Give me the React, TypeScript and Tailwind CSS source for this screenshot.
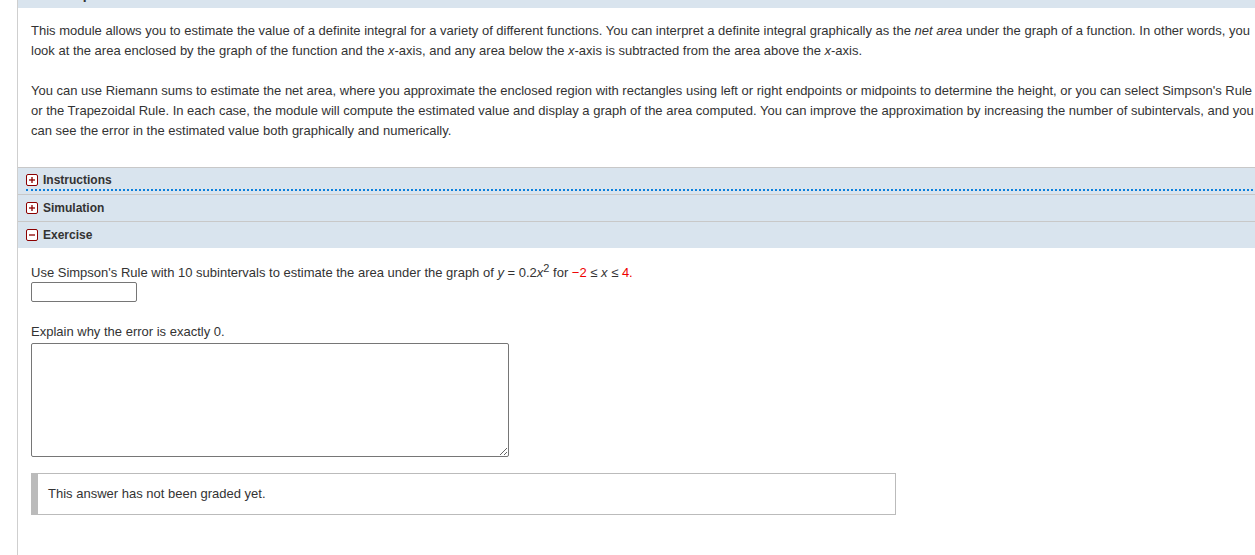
import React from "react";

function Toggle({ open }: { open: boolean }) {
  return (
    <svg width="12" height="12" viewBox="0 0 12 12" className="shrink-0">
      <rect x="0.5" y="0.5" width="11" height="11" rx="1.5" fill="#fff" stroke="#8b0000" />
      <line x1="3" y1="6" x2="9" y2="6" stroke="#8b0000" strokeWidth="1.3" />
      {!open && <line x1="6" y1="3" x2="6" y2="9" stroke="#8b0000" strokeWidth="1.3" />}
    </svg>
  );
}

function Section({ title, open, focused }: { title: string; open?: boolean; focused?: boolean }) {
  return (
    <div className="h-[27px] border-t border-[#c8c8c8] bg-[#d9e4ee] pl-[8px] flex items-start">
      <div
        className={
          focused
            ? "h-[23px] w-full flex items-center gap-[5px] border-b-2 border-dotted border-[#0b7fdb] pt-[2px]"
            : "h-[26px] w-full flex items-center gap-[5px]"
        }
      >
        <Toggle open={!!open} />
        <span className="text-[12px] font-semibold text-[#333]">{title}</span>
      </div>
    </div>
  );
}

export default function App() {
  return (
    <div className="w-[1255px] h-[555px] overflow-hidden bg-white font-['Liberation_Sans',Arial,sans-serif] text-[#333]">
      <div className="ml-[17px] h-full border-l border-[#cfcfcf] w-[1300px]">
        <div className="h-[8px] bg-[#d9e4ee] overflow-hidden relative">
          <div className="absolute left-[22px] top-[-13px] text-[14px] font-bold leading-none text-[#333]">Description</div>
        </div>

        <div className="px-[13px] pt-[13px] text-[13px] leading-[20px] w-[1300px] whitespace-nowrap">
          <p>
            This module allows you to estimate the value of a definite integral for a variety of different functions. You can interpret a
            definite integral graphically as the <i>net area</i> under the graph of a function. In other words, you
            <br />
            look at the area enclosed by the graph of the function and the <i>x</i>-axis, and any area below the <i>x</i>-axis is
            subtracted from the area above the <i>x</i>-axis.
          </p>
          <p className="mt-[20px]">
            You can use Riemann sums to estimate the net area, where you approximate the enclosed region with rectangles using left or
            right endpoints or midpoints to determine the height, or you can select Simpson's Rule
            <br />
            or the Trapezoidal Rule. In each case, the module will compute the estimated value and display a graph of the area computed.
            You can improve the approximation by increasing the number of subintervals, and you
            <br />
            can see the error in the estimated value both graphically and numerically.
          </p>
        </div>

        <div className="mt-[26px]">
          <Section title="Instructions" focused />
          <Section title="Simulation" />
          <Section title="Exercise" open />
        </div>

        <div className="px-[13px] pt-[16px] text-[13px] leading-[18px]">
          <p>
            Use Simpson's Rule with 10 subintervals to estimate the area under the graph of <i>y</i> = 0.2<i>x</i>
            <sup className="text-[11px]">2</sup> for <span className="text-[#e00]">−2</span> ≤ <i>x</i> ≤{" "}
            <span className="text-[#e00]">4.</span>
          </p>
          <input
            type="text"
            className="block w-[106px] h-[20px] border border-[#767676] rounded-[2px] bg-white"
          />
          <p className="mt-[21px]">Explain why the error is exactly 0.</p>
          <textarea className="mt-[2px] block w-[478px] h-[114px] border border-[#767676] rounded-[2px] bg-white resize" />
          <div className="mt-[16px] w-[865px] h-[42px] border border-[#bbb] border-l-[7px] flex items-center pl-[10px]">
            <span>This answer has not been graded yet.</span>
          </div>
        </div>
      </div>
    </div>
  );
}
